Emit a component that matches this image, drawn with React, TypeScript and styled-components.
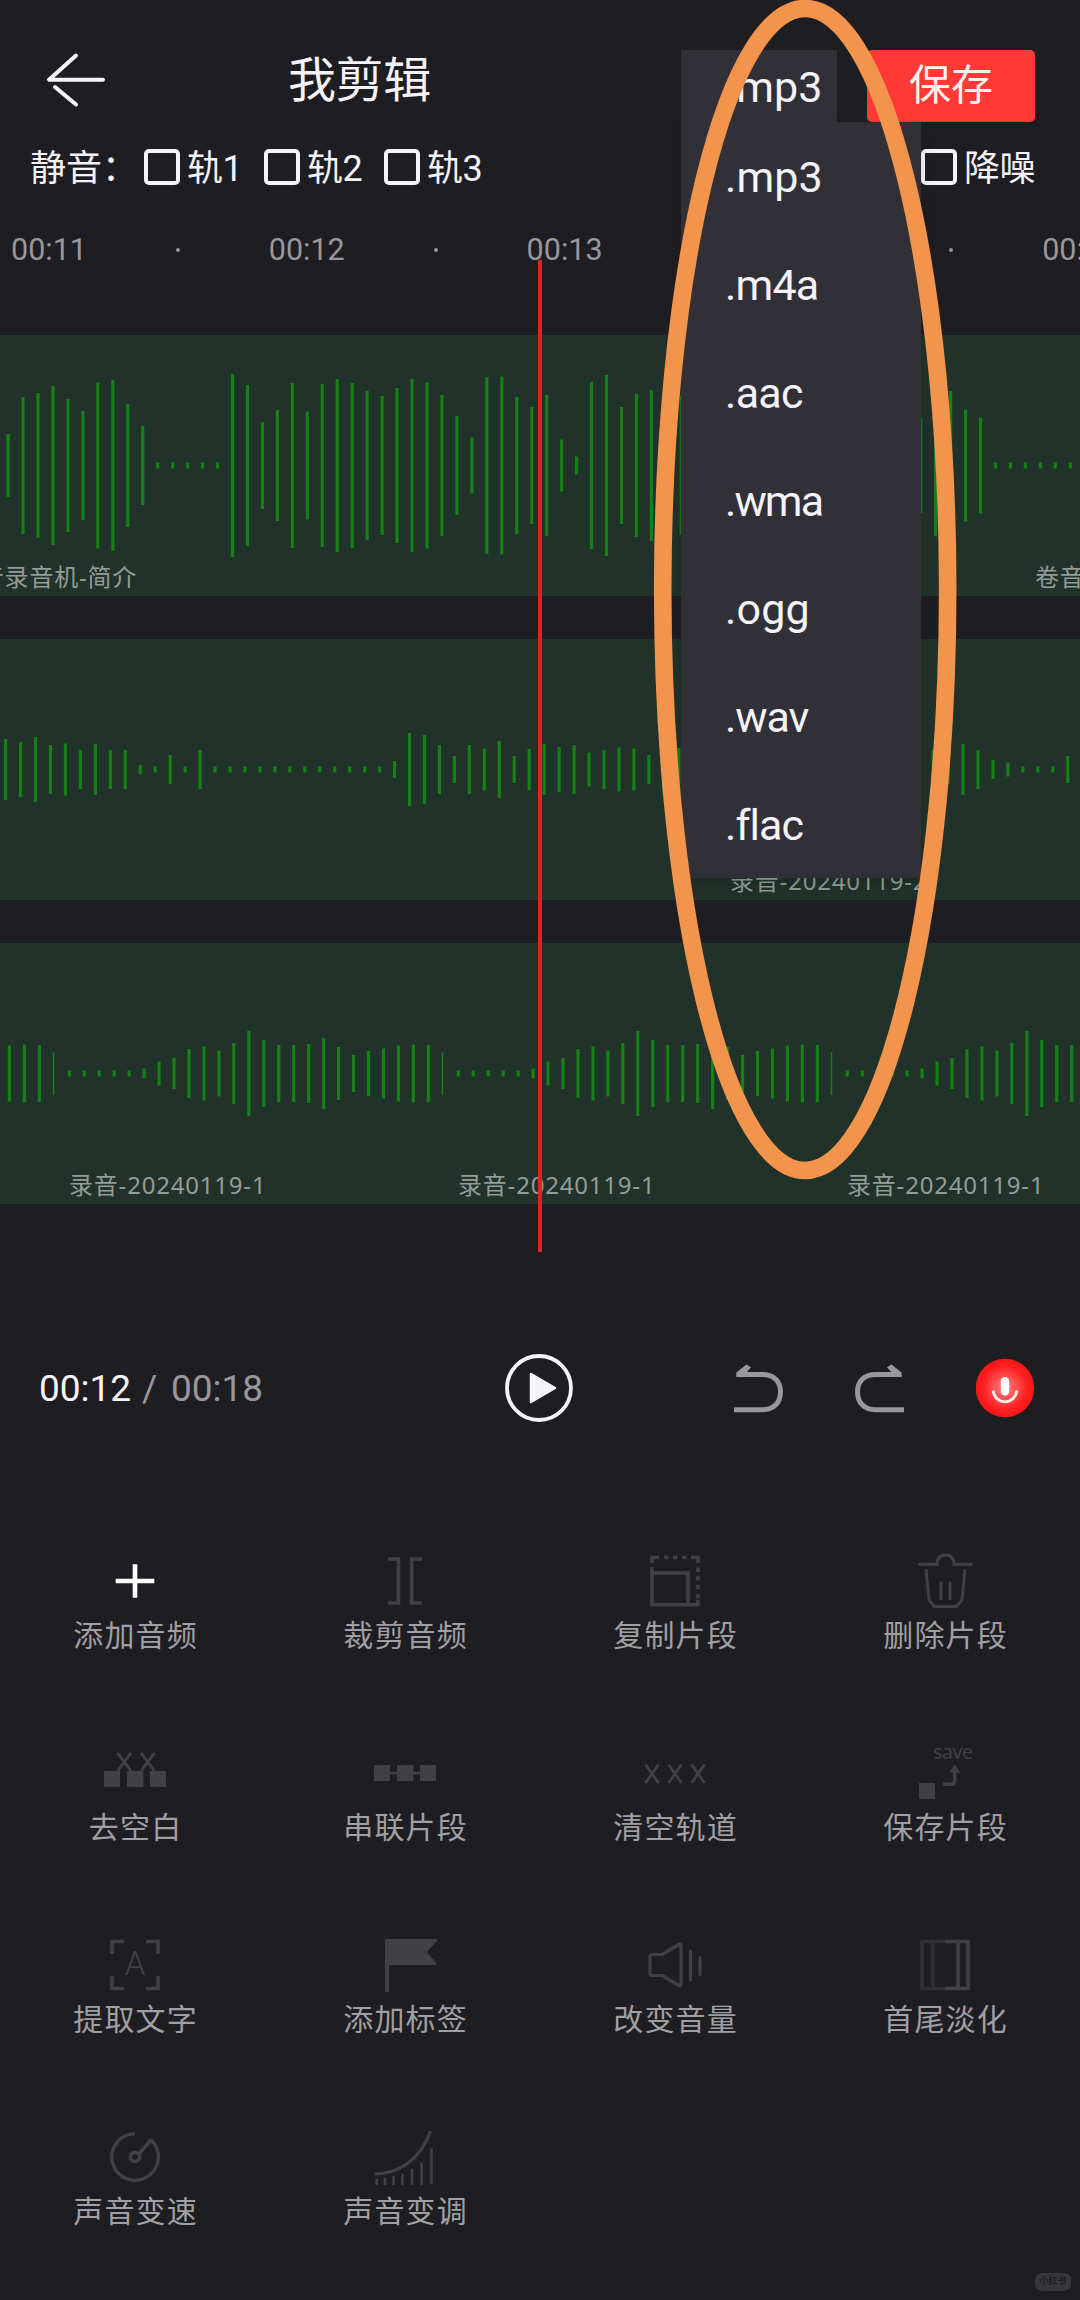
import React from 'react';
import styled, { createGlobalStyle } from 'styled-components';

const BG = '#1e1d21';
const PANEL = '#313036';
const FG = '#f5f3f8';
const MUTED = '#98979c';
const ICON = '#414045';

const GlobalStyle = createGlobalStyle`
  * { box-sizing: border-box; }
  body {
    margin: 0;
    background: ${BG};
    color: ${FG};
    font-family: Roboto, 'Noto Sans CJK SC', sans-serif;
  }
`;

const Screen = styled.main`
  position: relative;
  width: 1080px;
  height: 2300px;
  overflow: hidden;
  background: ${BG};
  display: flex;
  flex-direction: column;

  & > * {
    flex-shrink: 0;
  }
`;

const Header = styled.header`
  display: flex;
  align-items: flex-start;
  padding: 50px 45px 0 46px;
`;

const BackButton = styled.button`
  width: 60px;
  height: 60px;
  padding: 0;
  border: 0;
  background: none;
`;

const Title = styled.h1`
  margin: 0 auto 0 182px;
  font-size: 48px;
  font-weight: 400;
  line-height: 62px;
  letter-spacing: -0.4px;
`;

const FormatSelect = styled.div`
  position: relative;
  z-index: 5;
  width: 156px;
  height: 72px;
  margin-right: 30px;
  padding-left: 44px;
  background: ${PANEL};
  font-size: 43px;
  line-height: 75px;
`;

const FormatMenu = styled.ul`
  position: absolute;
  top: 100%;
  left: 0;
  width: 240px;
  margin: 0;
  padding: 0;
  list-style: none;
  background: ${PANEL};
  box-shadow: 0 8px 14px rgba(0, 0, 0, 0.12);
`;

const FormatOption = styled.li<{ $spacing: number }>`
  height: 108px;
  padding-left: 44px;
  line-height: 111px;
  letter-spacing: ${(p) => p.$spacing}px;
`;

const SaveButton = styled.button`
  width: 168px;
  height: 72px;
  padding: 0;
  border: 0;
  border-radius: 5px;
  background: #ff3936;
  color: #fff0f2;
  font: 400 42px/70px Roboto, 'Noto Sans CJK SC', sans-serif;
`;

const MuteRow = styled.div`
  display: flex;
  align-items: center;
  height: 36px;
  margin-top: 27px;
  padding: 0 44px 0 30px;
  font-size: 36px;
  line-height: 36px;
`;

const MuteLabel = styled.span`
  width: 114px;
  padding-top: 3px;
  white-space: nowrap;
`;

const CheckItem = styled.label<{ $last?: boolean }>`
  display: flex;
  align-items: center;
  gap: 7px;
  width: ${(p) => (p.$last ? 115 : 120)}px;
  margin-left: ${(p) => (p.$last ? 'auto' : 0)};
  white-space: nowrap;
`;

const CheckText = styled.span`
  padding-top: 3px;
  letter-spacing: -0.4px;
`;

const Box = styled.span`
  flex: none;
  width: 36px;
  height: 36px;
  border: 4px solid ${FG};
  border-radius: 5px;
`;

const Timeline = styled.section`
  position: relative;
  margin-top: 34px;
  overflow: hidden;
  padding-bottom: 48px;
`;

const Ruler = styled.div`
  display: flex;
  height: 60px;
  margin-bottom: 56px;
  padding-left: 11px;
  color: ${MUTED};
  font-size: 30.5px;
  line-height: 62px;
`;

const Tick = styled.div`
  flex: none;
  display: grid;
  grid-template-columns: 165px 1fr;
  align-items: center;
  width: 257.8px;

  &::after {
    content: '';
    width: 4px;
    height: 4px;
    border-radius: 50%;
    background: ${MUTED};
  }
`;

const Tracks = styled.div`
  display: flex;
  flex-direction: column;
  gap: 43px;
`;

const Track = styled.div`
  display: flex;
  flex-direction: column;
  height: 261px;
  padding-top: 37px;
  background: #203229;
  overflow: hidden;
`;

const Wave = styled.svg`
  display: block;
  flex: none;
  width: 1080px;
  height: 187px;
`;

const Clips = styled.div<{ $start: number }>`
  display: flex;
  margin-left: ${(p) => p.$start}px;
  height: 37px;
`;

const ClipName = styled.span<{ $width: number }>`
  flex: none;
  width: ${(p) => p.$width}px;
  padding-left: 15px;
  font-family: 'Noto Sans', 'Noto Sans CJK SC', sans-serif;
  font-size: 24px;
  line-height: 35px;
  letter-spacing: 0.8px;
  color: #939d98;
  white-space: nowrap;
`;

const Playhead = styled.div`
  position: absolute;
  top: 41px;
  bottom: 0;
  left: 538px;
  width: 4px;
  background: #e3211f;
`;

const Player = styled.div`
  display: grid;
  grid-template-columns: 1fr 72px 1fr;
  align-items: center;
  height: 80px;
  margin-top: 96px;
  padding: 0 45px 0 39px;
`;

const Clock = styled.div`
  display: flex;
  font-size: 37px;
  color: ${MUTED};
  white-space: pre;
`;

const Elapsed = styled.span`
  width: 103px;
  color: ${FG};
`;

const Slash = styled.span`
  width: 29px;
`;

const PlayerActions = styled.div`
  display: flex;
  justify-content: flex-end;
  align-items: center;
`;

const ActionIcon = styled.svg<{ $gap: number }>`
  display: block;
  margin-right: ${(p) => p.$gap}px;
`;

const Tools = styled.div`
  display: grid;
  grid-template-columns: repeat(4, 270px);
  grid-auto-rows: 192px;
  margin-top: 121px;
`;

const Tool = styled.div`
  display: flex;
  flex-direction: column;
  align-items: center;
  gap: 5px;
`;

const ToolIcon = styled.svg`
  display: block;
  width: 80px;
  height: 64px;
  overflow: visible;
`;

const ToolName = styled.span`
  font-size: 30px;
  line-height: 36px;
  letter-spacing: 1.2px;
  margin-right: -1.2px;
  color: #a09fa3;
`;

const Highlight = styled.svg`
  position: absolute;
  top: -2px;
  left: 653px;
  z-index: 10;
  pointer-events: none;
`;

const Watermark = styled.div`
  position: absolute;
  right: 9px;
  bottom: 9px;
  width: 36px;
  height: 18px;
  border-radius: 7px;
  background: #37363a;
  color: #1f1e22;
  font-size: 9px;
  font-weight: 700;
  line-height: 17px;
  text-align: center;
`;

/* ---------- data ---------- */

const PITCH = 14.96;
const dots = (n: number) => Array<number>(n).fill(6);

const wave1 = [
  63, 137, 145, 159, 133, 109, 166, 171, 123, 79, ...dots(5),
  183, 161, 87, 111, 165, 108, 163, 173, 165, 149, 139, 155, 173, 166, 141, 99, 56, 177, 178, 137, 117,
  141, 52, 18, 167, 181, 117, 143, 151, 140, 139,
  120, 90, 130, 150, 160, 140, 110, 90, 130, 150, 120, 80, 60, 70, 85,
  95, 141, 149, 112, 96, ...dots(6),
];

const wave2 = [
  61, 55, 65, 49, 52, 39, 51, 39, 39, 9, 6, 29, 6, 39, ...dots(12),
  17, 73, 69, 49, 27, 49, 42, 57, 27, 41,
  51, 45, 49, 34, 39, 44, 42, 29, 51, 43,
  40, 38, 42, 36, 30, 34, 28, 36, 40, 42, 38, 34, 30, 36, 40, 42,
  39, 28, 51, 39, 19, 14, ...dots(3), 27,
];

const clipWave = [
  ...dots(5), 10, 24, 31, 49, 54, 46, 61, 85, 67, 57, 57, 59, 71, 53, 37, 45, 50, 56, 58, 57, 43,
];

type Bar = { x: number; h: number; w: number };

const toBars = (first: number, heights: number[]): Bar[] =>
  heights.map((h, i) => ({ x: first + i * PITCH, h, w: 3.2 }));

// The last bar of every clip is cut off by the clip's right edge.
const loopBars = (starts: number[]): Bar[] =>
  starts.flatMap((s) =>
    clipWave.map((h, i) => {
      const cut = i === clipWave.length - 1;
      return { x: s + 15.3 + i * PITCH - (cut ? 0.8 : 0), h, w: cut ? 1.4 : 3.2 };
    }),
  );

const tracks = [
  { bars: toBars(8.1, wave1), start: -60, clips: [{ name: '卷音录音机-简介', width: 1080 }, { name: '卷音录音机-简介', width: 1080 }] },
  { bars: toBars(5.6, wave2), start: 715, clips: [{ name: '录音-20240119-2', width: 700 }] },
  {
    bars: loopBars([-335, 54, 443, 832]),
    start: 54,
    clips: [
      { name: '录音-20240119-1', width: 389 },
      { name: '录音-20240119-1', width: 389 },
      { name: '录音-20240119-1', width: 389 },
    ],
  },
];

const formats = [
  { name: '.mp3', spacing: 0.1 },
  { name: '.m4a', spacing: -0.8 },
  { name: '.aac', spacing: -0.7 },
  { name: '.wma', spacing: -1.9 },
  { name: '.ogg', spacing: 0.2 },
  { name: '.wav', spacing: -1.1 },
  { name: '.flac', spacing: -0.9 },
];

const line = { fill: 'none', stroke: ICON, strokeWidth: 3.6 } as const;

const tools = [
  {
    name: '添加音频',
    icon: <path d="M20.7 32H59.3M40 15.3V48.7" stroke="#fff" strokeWidth="4.6" />,
  },
  {
    name: '裁剪音频',
    icon: <path {...line} d="M23 10H33.4V54H23M57 10H46.6V54H57" />,
  },
  {
    name: '复制片段',
    icon: (
      <>
        <path {...line} d="M17 14V8.5H24M29 8.5h4.5M38 8.5h4.5M47 8.5h4.5M56 8.5H63V14" />
        <path {...line} d="M63 18.5v4.5M63 27v4.5M63 36v4.5M63 45v4.5" />
        <path {...line} d="M17 18V24H53V54M17 24V55.8H63V51" />
      </>
    ),
  },
  {
    name: '删除片段',
    icon: (
      <path
        {...line}
        d="M13 15.3H32C32 9 35 6 40.5 6S49 9 49 15.3H67.5M21 20L24 51L29 57.5H51.5L57 51L60 20M36 32.5V51M45 32.5V51"
        strokeWidth={3}
      />
    ),
  },
  {
    name: '去空白',
    icon: (
      <>
        <path fill={ICON} d="M9 30h16v16H9zM32 30h16.4v16H32zM55 30h16v16H55z" />
        <path {...line} strokeWidth={2.8} d="M22.500 12L36 30M36 12L22.500 30M46 12L59.500 30M59.500 12L46 30" />
      </>
    ),
  },
  {
    name: '串联片段',
    icon: <path fill={ICON} d="M9 24h16v6.700h7V24h16.400v6.700H55V24h16v16H55v-6.700h-6.600V40H32v-6.700h-7V40H9z" />,
  },
  {
    name: '清空轨道',
    icon: (
      <path
        {...line}
        strokeWidth={2.8}
        d="M10.500 23.500L23.500 42M23.500 23.500L10.500 42M33.500 23.500L46.500 42M46.500 23.500L33.500 42M56.500 23.500L69.500 42M69.500 23.500L56.500 42"
      />
    ),
  },
  {
    name: '保存片段',
    icon: (
      <>
        <text x="28" y="18" fill={ICON} fontFamily="Noto Sans" fontSize="19.500" textLength="40">save</text>
        <path fill={ICON} d="M14 42h16v16H14z" />
        <path {...line} d="M38 43.200H46.500Q49.700 43.200 49.700 40V29" />
        <path fill={ICON} d="M49.700 23L55 31.500H44.400z" />
      </>
    ),
  },
  {
    name: '提取文字',
    icon: (
      <>
        <path {...line} d="M17 21V8.500H29M51 8.500H63V21M63 43V55.500H51M29 55.500H17V43" />
        <text x="40" y="42" fill={ICON} fontFamily="Roboto" fontWeight="300" fontSize="33" textAnchor="middle">A</text>
      </>
    ),
  },
  {
    name: '添加标签',
    icon: <path fill={ICON} d="M20 7.500Q20 6 22 6H71.500Q73 6 72 8L61.500 19L71.800 30.500Q72.500 32 71 32H24V59H20z" />,
  },
  {
    name: '改变音量',
    icon: (
      <path
        {...line}
        strokeWidth={3.200}
        strokeLinejoin="round"
        strokeLinecap="round"
        d="M17 21.500H27L44 11.500Q46 10.500 46 12.500V51.500Q46 53.500 44 52.500L27 42.500H17Q15 42.500 15 40.500V23.500Q15 21.500 17 21.500zM55.500 18V47M65 24.500V41.500"
      />
    ),
  },
  {
    name: '首尾淡化',
    icon: (
      <>
        <path {...line} stroke="#302f33" d="M40 8.500H17V55.500H40M28 8.500V55.500" />
        <path {...line} d="M40 8.500H63V55.500H40M53 8.500V55.500" />
      </>
    ),
  },
  {
    name: '声音变速',
    icon: (
      <>
        <path {...line} strokeWidth={3.400} d="M40 8.700A23.300 23.300 0 1 0 56 15L44.500 28" strokeLinejoin="round" />
        <circle {...line} cx="40" cy="32" r="4.600" />
      </>
    ),
  },
  {
    name: '声音变调',
    icon: (
      <>
        <path {...line} strokeWidth={3} d="M9.700 49C32 49 55 36 65.500 6" />
        <path
          {...line}
          strokeWidth={2.600}
          d="M11.700 54V60M20 52.500V60M28.500 51V60M37.500 48.700V60M47 44V60M56.500 37.500V60M66.500 23.500V59"
        />
      </>
    ),
  },
];

/* ---------- pieces ---------- */

const TrackRow = ({ bars, start, clips }: (typeof tracks)[number]) => (
  <Track>
    <Wave viewBox="0 0 1080 187">
      {bars.map((b, i) => (
        <rect key={i} x={b.x - b.w / 2} y={93.5 - b.h / 2} width={b.w} height={b.h} fill="#148114" />
      ))}
    </Wave>
    <Clips $start={start}>
      {clips.map((c, i) => (
        <ClipName key={i} $width={c.width}>{c.name}</ClipName>
      ))}
    </Clips>
  </Track>
);

const undoShape = (
  <>
    <path d="M4 12.500H28.500C40 12.500 46.500 19.500 46.500 30S40 47.800 28.500 47.800H0" fill="none" stroke={MUTED} strokeWidth="5" />
    <path d="M2.300 15V10.500L12.500 2.500L17 5.200L12.500 10.500V15z" fill={MUTED} />
  </>
);

export default function App() {
  return (
    <>
      <GlobalStyle />
      <Screen>
        <Header>
          <BackButton aria-label="返回">
            <svg width="60" height="60" viewBox="0 0 60 60" fill="none" stroke={FG} strokeWidth="4" strokeLinecap="round">
              <path d="M30 5.500L3 29.700H57M9 37L30 54.500" strokeLinejoin="round" />
            </svg>
          </BackButton>
          <Title>我剪辑</Title>
          <FormatSelect>
            .mp3
            <FormatMenu>
              {formats.map((f) => (
                <FormatOption key={f.name} $spacing={f.spacing}>{f.name}</FormatOption>
              ))}
            </FormatMenu>
          </FormatSelect>
          <SaveButton>保存</SaveButton>
        </Header>

        <MuteRow>
          <MuteLabel>静音：</MuteLabel>
          <CheckItem><Box /><CheckText>轨1</CheckText></CheckItem>
          <CheckItem><Box /><CheckText>轨2</CheckText></CheckItem>
          <CheckItem><Box /><CheckText>轨3</CheckText></CheckItem>
          <CheckItem $last><Box /><CheckText>降噪</CheckText></CheckItem>
        </MuteRow>

        <Timeline>
          <Ruler>
            {['00:11', '00:12', '00:13', '00:14', '00:15'].map((t) => (
              <Tick key={t}>{t}</Tick>
            ))}
          </Ruler>
          <Tracks>
            {tracks.map((t, i) => (
              <TrackRow key={i} {...t} />
            ))}
          </Tracks>
          <Playhead />
        </Timeline>

        <Player>
          <Clock>
            <Elapsed>00:12</Elapsed>
            <Slash>/</Slash>
            <span>00:18</span>
          </Clock>
          <svg width="72" height="72" viewBox="0 0 72 72">
            <circle cx="38" cy="36" r="32" fill="none" stroke={FG} strokeWidth="3.800" />
            <path d="M30 22L54 36L30 50z" fill={FG} stroke={FG} strokeWidth="2.500" strokeLinejoin="round" />
          </svg>
          <PlayerActions>
            <ActionIcon $gap={70} width="50" height="52" viewBox="0 0 50 52">{undoShape}</ActionIcon>
            <ActionIcon $gap={71} width="50" height="52" viewBox="0 0 50 52">
              <g transform="translate(50 0) scale(-1 1)">{undoShape}</g>
            </ActionIcon>
            <ActionIcon $gap={0} width="60" height="60" viewBox="0 0 60 60">
              <defs>
                <radialGradient id="rec">
                  <stop offset="0" stopColor="#ff8a8a" />
                  <stop offset="0.350" stopColor="#ff5555" />
                  <stop offset="0.750" stopColor="#ff1f20" />
                  <stop offset="1" stopColor="#ff1516" />
                </radialGradient>
              </defs>
              <circle cx="30" cy="30" r="29.200" fill="url(#rec)" />
              <rect x="25.800" y="19" width="8.400" height="18.500" rx="4.200" fill="#fff" />
              <path d="M18.200 32.500C18.600 39 23.500 43.800 30 43.800S41.400 39 41.800 32.500" fill="none" stroke="#fff0f0" strokeWidth="2.800" />
            </ActionIcon>
          </PlayerActions>
        </Player>

        <Tools>
          {tools.map((t) => (
            <Tool key={t.name}>
              <ToolIcon viewBox="0 0 80 64">{t.icon}</ToolIcon>
              <ToolName>{t.name}</ToolName>
            </Tool>
          ))}
        </Tools>

        <Highlight width="306" height="1184" viewBox="0 0 306 1184">
          <ellipse cx="152.200" cy="591.500" rx="142.500" ry="581" fill="none" stroke="#f2944b" strokeWidth="17.600" />
        </Highlight>
        <Watermark>小红书</Watermark>
      </Screen>
    </>
  );
}
